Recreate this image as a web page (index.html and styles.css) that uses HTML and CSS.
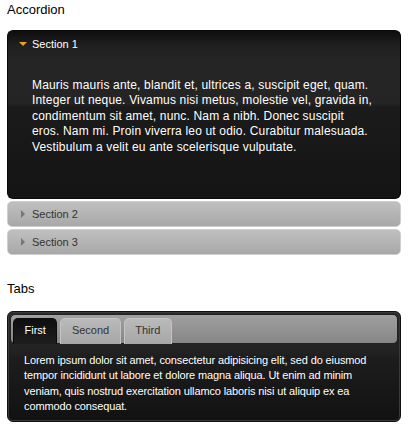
FILE: index.html
```html
<!DOCTYPE html>
<html>
<head>
<meta charset="utf-8">
<link rel="stylesheet" href="styles.css">
</head>
<body>
<h2 class="demo-title">Accordion</h2>
<div class="accordion">
  <div class="acc-section acc-active">
    <div class="acc-header">
      <svg class="tri" width="8" height="8" viewBox="0 0 8 8"><path d="M0 2 L8 2 L4 6 Z" fill="#f0a020"/></svg>
      <span>Section 1</span>
    </div>
    <div class="acc-content">
      <p>Mauris mauris ante, blandit et, ultrices a, suscipit eget, quam. Integer ut neque. Vivamus nisi metus, molestie vel, gravida in, condimentum sit amet, nunc. Nam a nibh. Donec suscipit<br>eros. Nam mi. Proin viverra leo ut odio. Curabitur malesuada. Vestibulum a velit eu ante scelerisque vulputate.</p>
    </div>
  </div>
  <div class="acc-section">
    <div class="acc-header">
      <svg class="tri" width="8" height="8" viewBox="0 0 8 8"><path d="M2 0 L6 4 L2 8 Z" fill="#777"/></svg>
      <span>Section 2</span>
    </div>
  </div>
  <div class="acc-section">
    <div class="acc-header">
      <svg class="tri" width="8" height="8" viewBox="0 0 8 8"><path d="M2 0 L6 4 L2 8 Z" fill="#777"/></svg>
      <span>Section 3</span>
    </div>
  </div>
</div>

<h2 class="demo-title tabs-title">Tabs</h2>
<div class="tabs">
  <ul class="tab-nav">
    <li class="tab tab-active">First</li>
    <li class="tab">Second</li>
    <li class="tab">Third</li>
  </ul>
  <div class="tab-panel">
    <p>Lorem ipsum dolor sit amet, consectetur adipisicing elit, sed do eiusmod tempor incididunt ut labore et dolore magna aliqua. Ut enim ad minim veniam, quis nostrud exercitation ullamco laboris nisi ut aliquip ex ea commodo consequat.</p>
  </div>
</div>
</body>
</html>
```
FILE: styles.css
```css
html, body {
  margin: 0;
  padding: 0;
  background: #fff;
}
body {
  padding: 0 7px;
  font-family: "Liberation Sans", Arial, sans-serif;
  width: 394px;
}
.demo-title {
  margin: 0;
  padding-top: 2px;
  font-size: 13px;
  line-height: 16px;
  font-weight: normal;
  color: #000;
}
.accordion {
  margin-top: 12px;
  display: flex;
  flex-direction: column;
  gap: 2px;
  font-size: 11px;
}
.acc-section {
  border-radius: 6px;
}
.acc-active {
  background: linear-gradient(#0e0e0e 0px, #1f1f1f 14px, #252525 30px, #242424 72px, #1b1b1b 76px, #141414 168px);
  border: 1px solid #0a0a0a;
  border-right-color: #000;
}
.acc-header {
  height: 24px;
  display: flex;
  align-items: center;
  gap: 5px;
  padding-left: 11px;
  border-radius: 5px;
  background: linear-gradient(#c0c0c0, #a8a8a8);
  border: 1px solid #cfcfcf;
  color: #333;
}
.acc-active .acc-header {
  background: transparent;
  border: none;
  height: 26px;
  padding-left: 11px;
  padding-bottom: 1px;
  box-sizing: border-box;
  color: #fff;
}
.acc-content {
  height: 141px;
  padding: 21px 4px 0 24px;
  box-sizing: border-box;
  color: #fff;
}
.acc-content p {
  margin: 0;
  font-size: 12px;
  line-height: 15.4px;
  letter-spacing: 0.17px;
}
.tabs-title {
  margin-top: 24px;
}
.tabs {
  margin-top: 14px;
  border: 1px solid #111;
  border-radius: 6px;
  padding: 2px;
  background: linear-gradient(#2a2a2a 0px, #222 40px, #1d1d1d 46px, #111 112px);
  box-shadow: inset 0 0 0 1px #3a3a3a;
}
.tab-nav {
  list-style: none;
  margin: 0;
  padding: 3px 2px 0 2px;
  display: flex;
  gap: 3px;
  height: 25px;
  background: linear-gradient(#a0a0a0, #868686);
  border: 1px solid #222;
  border-radius: 5px;
  font-size: 11px;
}
.tab {
  height: 26px;
  padding: 0 10.5px 3px 10.5px;
  display: flex;
  align-items: center;
  box-sizing: border-box;
  border: 1px solid #c4c4c4;
  border-bottom: none;
  border-radius: 5px 5px 0 0;
  background: linear-gradient(#bababa, #a6a6a6);
  color: #333;
  margin-bottom: -1px;
}
.tab-active {
  background: linear-gradient(#0e0e0e, #1e1e1e);
  border-color: #0a0a0a;
  color: #fff;
}
.tab-panel {
  padding: 9px 14px 5px 14px;
  color: #fff;
}
.tab-panel p {
  margin: 0;
  font-size: 11px;
  line-height: 15.3px;
  letter-spacing: -0.12px;
}
```
